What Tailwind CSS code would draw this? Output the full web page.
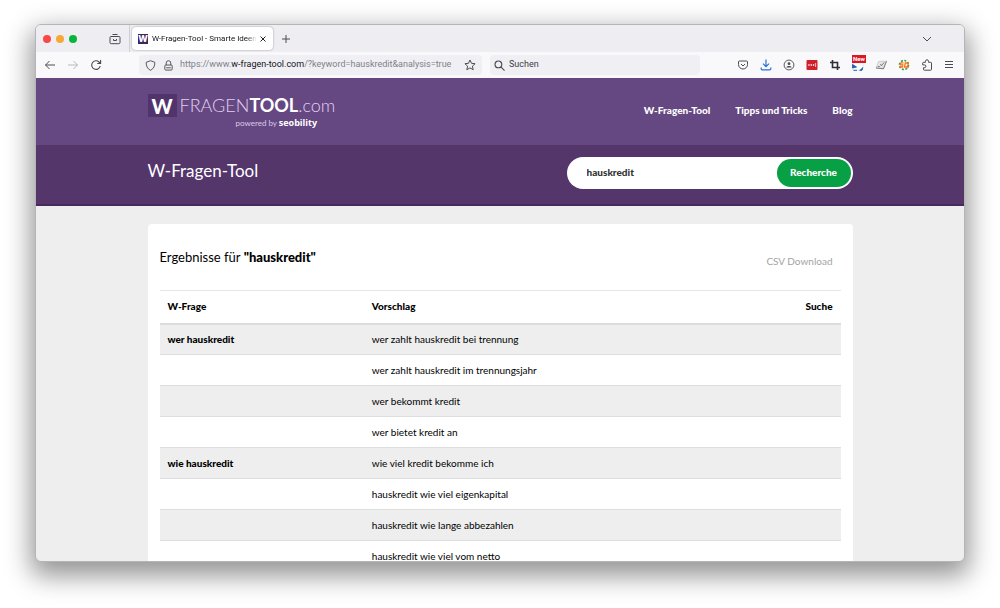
<!DOCTYPE html>
<html lang="de">
<head>
<meta charset="utf-8">
<title>W-Fragen-Tool - Smarte Ideen</title>
<script src="https://cdn.jsdelivr.net/npm/@tailwindcss/browser@4"></script>
</head>
<body class="h-screen bg-white px-[35px] pt-6 pb-[46px] font-['Roboto',sans-serif] text-[#15141a] overflow-hidden">
<div class="flex h-full flex-col overflow-hidden rounded-md border border-[#b5b5b8] bg-[#eeeeee] shadow-[0_10px_26px_4px_rgba(0,0,0,0.42)]">

  <!-- Tab strip -->
  <div class="flex h-[27px] shrink-0 items-center bg-[#eeeef2] text-[#4b4a52]">
    <div class="flex h-full w-[94px] shrink-0 items-center border-r border-[#cfcfd4] pl-[7px]">
      <span class="size-2 rounded-full bg-[#fb4748]"></span>
      <span class="ml-[5px] size-2 rounded-full bg-[#f6a935]"></span>
      <span class="ml-[5px] size-2 rounded-full bg-[#08b53c]"></span>
      <button class="ml-8" aria-label="Ansicht">
        <svg class="size-3" viewBox="0 0 12 12" fill="none" stroke="currentColor"><path d="M3.500 1.500h5M2 3.500h8a1 1 0 0 1 1 1v5a1.200 1.200 0 0 1-1.200 1.200H2.200A1.200 1.200 0 0 1 1 9.500v-5a1 1 0 0 1 1-1zM4.500 6v1.500h3V6" /></svg>
      </button>
    </div>
    <div class="ml-0.5 flex h-[23px] w-[141px] items-center rounded-sm bg-white px-1.5 text-[#15141a] shadow-[0_0_2px_rgba(0,0,0,0.4)]">
      <span class="flex h-[10px] w-[10px] shrink-0 items-center justify-center bg-[#3d2463] font-['Inter',sans-serif] text-[9px] font-extrabold leading-none text-white">W</span>
      <span class="ml-1 w-0 flex-1 overflow-hidden whitespace-nowrap text-[8px] mask-r-from-90%">W-Fragen-Tool - Smarte Ideen f</span>
      <button class="ml-0.5" aria-label="Tab schließen"><svg class="size-2" viewBox="0 0 8 8" stroke="#222" fill="none"><path d="M1.500 1.500l5 5M6.500 1.500l-5 5"/></svg></button>
    </div>
    <button class="ml-2" aria-label="Neuer Tab"><svg class="size-[10px]" viewBox="0 0 10 10" stroke="currentColor" fill="none"><path d="M5 1v8M1 5h8"/></svg></button>
    <button class="mr-8 ml-auto" aria-label="Alle Tabs"><svg class="size-[10px]" viewBox="0 0 10 10" stroke="currentColor" fill="none"><path d="M1 3l4 4 4-4"/></svg></button>
  </div>

  <!-- Toolbar -->
  <div class="flex h-[26px] shrink-0 items-center bg-[#f9f9fb] pr-[10px] pl-2 text-[#4b4a52]">
    <button aria-label="Zurück"><svg class="size-3" viewBox="0 0 12 12" fill="none" stroke="currentColor"><path d="M11 6H1.500M5.500 2l-4 4 4 4"/></svg></button>
    <button class="ml-[11px] text-[#b8b8bd]" aria-label="Vor"><svg class="size-3" viewBox="0 0 12 12" fill="none" stroke="currentColor"><path d="M1 6h9.500M6.500 2l4 4-4 4"/></svg></button>
    <button class="ml-[11px]" aria-label="Neu laden"><svg class="size-3" viewBox="0 0 12 12" fill="none" stroke="currentColor" stroke-width="1.100"><path d="M10.200 7A4.300 4.300 0 1 1 9 3L10.500 4.300M10.600 1v3.500H7.200"/></svg></button>
    <div class="ml-[37px] flex h-5 w-[343px] items-center rounded-sm bg-[#f0f0f4] px-1.5">
      <svg class="size-[11px] shrink-0" viewBox="0 0 12 12" fill="none" stroke="currentColor"><path d="M6 .8L10.700 2.500C10.800 6.500 9.500 9.500 6 11.300 2.500 9.500 1.200 6.500 1.300 2.500z"/></svg>
      <svg class="ml-[7px] size-[11px] shrink-0" viewBox="0 0 12 12" fill="none" stroke="currentColor"><path d="M3.500 5.500V3.300a2.500 2.500 0 0 1 5 0v2.200"/><rect x="2" y="5.500" width="8" height="5.500" rx="1"/><path d="M3.500 8.500h5"/></svg>
      <span class="ml-1.5 flex-1 whitespace-nowrap text-[9px] text-[#808088]">https://www.<span class="text-[#15141a]">w-fragen-tool.com</span>/?keyword=hauskredit&amp;analysis=true</span>
      <button aria-label="Lesezeichen"><svg class="size-3" viewBox="0 0 12 12" fill="none" stroke="currentColor" stroke-linejoin="round"><path d="M6 1l1.500 3.300 3.600.4-2.700 2.400.8 3.600L6 8.900l-3.200 1.800.8-3.600L.9 4.700l3.600-.4z"/></svg></button>
    </div>
    <label class="ml-2 flex h-5 w-[210px] items-center rounded-sm bg-[#f0f0f4] pl-1">
      <svg class="size-[11px] shrink-0" viewBox="0 0 12 12" fill="none" stroke="currentColor" stroke-width="1.200"><circle cx="4.800" cy="4.800" r="3.700"/><path d="M7.500 7.500l4 4"/></svg>
      <input class="ml-1 w-full bg-transparent text-[9px] placeholder:text-[#3b3a42] outline-none" placeholder="Suchen" aria-label="Suchen">
    </label>
    <div class="ml-auto flex items-center gap-[11px]">
      <button aria-label="Pocket"><svg class="size-3" viewBox="0 0 12 12" fill="none" stroke="currentColor"><path d="M2.500 2h7a1 1 0 0 1 1 1v2.500a4.500 4.500 0 0 1-9 0V3a1 1 0 0 1 1-1zM4 5l2 2 2-2"/></svg></button>
      <button class="text-[#2a6fd6]" aria-label="Downloads"><svg class="size-3" viewBox="0 0 12 12" fill="none" stroke="currentColor" stroke-width="1.200"><path d="M6 .5v7M3 4.700l3 3 3-3M1.200 8.500v1.300a1 1 0 0 0 1 1h7.600a1 1 0 0 0 1-1V8.500"/></svg></button>
      <button aria-label="Konto"><svg class="size-3" viewBox="0 0 12 12" fill="none" stroke="currentColor" stroke-width=".9"><circle cx="6" cy="6" r="4.900"/><circle cx="6" cy="4.700" r="1.400" fill="currentColor" stroke="none"/><path d="M3.300 8.600c0-2.300 5.400-2.300 5.400 0z" fill="currentColor" stroke="none"/></svg></button>
      <button aria-label="Passwörter"><svg class="size-3" viewBox="0 0 12 12"><rect x=".5" y="1" width="11" height="10" rx="1" fill="#d0202a"/><path d="M2.300 6h1.300M4.600 6h1.300M6.900 6h1.300" stroke="#fff" stroke-width="1.400"/><path d="M9.600 4v4" stroke="#fff" stroke-width=".7"/></svg></button>
      <button class="text-[#2f2e38]" aria-label="Zuschneiden"><svg class="size-3" viewBox="0 0 12 12" fill="none" stroke="currentColor" stroke-width="1.600"><path d="M3.500 1v7.500H11M1 3.500h7.500V11"/></svg></button>
      <button class="relative" aria-label="Neuigkeiten"><svg class="size-3" viewBox="0 0 12 12"><path d="M1 4h10v4a3 3 0 0 1-3 3H1z" fill="#fff" stroke="#c8d4e4" stroke-width=".5"/><path d="M.5 5.500v3.500l4-1zM1.500 11.300h3.500M7.500 11.300h2.500l.8-3" fill="#2367ad" stroke="#2367ad"/></svg><span class="absolute -top-1 left-0 bg-[#dc1622] px-px text-[6px] font-bold leading-[8px] text-white">New</span></button>
      <button aria-label="Prüfen"><svg class="size-3" viewBox="0 0 12 12" fill="none"><path d="M3.500 2.500l8-.5-3 7.500L1 9z" fill="#e6e6e6" stroke="#aaa" stroke-width=".5"/><path d="M1 9l7.500.8 3-7.500M5.500 5l.8 1.800 3-3.500M2.800 7.500h2" stroke="#555" stroke-width=".7"/></svg></button>
      <button aria-label="SEOquake"><svg class="size-3" viewBox="0 0 12 12" fill="none"><circle cx="6" cy="6" r="4.500" stroke="#3a9d3e" stroke-width="1.600" stroke-dasharray="2 1.500"/><path d="M5.500 3.900H3L2.500 5.800h2.300L4.300 8H1.300M7.300 4h3L9.600 8H6.500zM8.800 7l1.500 1.800" stroke="#f5761a" stroke-width="1.300"/></svg></button>
      <button aria-label="Erweiterungen"><svg class="size-3" viewBox="0 0 12 12" fill="none" stroke="currentColor" stroke-linejoin="round"><path d="M4.500 3.300V2.300a1.500 1.500 0 0 1 3 0v1h2.200a.8.8 0 0 1 .8.800v6.300a.8.8 0 0 1-.8.800H3.300a.8.8 0 0 1-.8-.8V8.700h1a1.400 1.400 0 0 0 0-2.800H1.700V4.100a.8.8 0 0 1 .8-.8z"/></svg></button>
      <button aria-label="Menü"><svg class="size-[10px]" viewBox="0 0 10 10" fill="none" stroke="currentColor"><path d="M1 1.500h8M1 4.500h8M1 7.500h8"/></svg></button>
    </div>
  </div>

  <!-- Page -->
  <div class="flex-1 overflow-hidden font-['Lato',sans-serif] text-[10px] text-black">
    <header class="h-[67px] bg-[#654882] px-9 text-white">
      <div class="mx-auto flex h-full max-w-[705px] items-center">
        <a href="#" class="flex flex-col">
          <span class="flex items-center">
            <span class="flex h-[23px] w-[29px] items-center justify-center bg-[#51346b] text-xl leading-none font-black">W</span>
            <span class="ml-[3px] text-lg leading-[23px] font-light text-[#e0d0f0]">FRAGEN<span class="font-bold text-white">TOOL</span>.com</span>
          </span>
          <span class="ml-[88px] text-[8px] leading-3 text-[#d9cbe8]">powered by <b class="font-['Open_Sans',sans-serif] text-[9px] text-white">seobility</b></span>
        </a>
        <nav class="ml-auto flex gap-[25px] pb-0.5 font-black">
          <a href="#">W-Fragen-Tool</a><a href="#">Tipps und Tricks</a><a href="#">Blog</a>
        </nav>
      </div>
    </header>
    <section class="h-[61px] border-b-2 border-[#47285f] bg-[#54366b] px-9 pb-1 text-white">
      <div class="mx-auto flex h-full max-w-[705px] items-center justify-between">
        <h1 class="pb-1 text-[17px]">W-Fragen-Tool</h1>
        <form class="flex h-8 w-[286px] items-center rounded-full bg-white p-0.5 pl-5">
          <input class="w-0 flex-1 font-black text-[#333] outline-none" value="hauskredit" aria-label="Suchbegriff">
          <button type="button" class="h-7 w-[74px] rounded-full bg-[#08a045] font-black">Recherche</button>
        </form>
      </div>
    </section>
    <main class="px-9 pt-[18px]">
      <div class="mx-auto max-w-[705px] rounded-t-sm bg-white px-3 pt-6">
        <div class="flex h-[42px] items-start justify-between pr-2">
          <h2 class="text-[13px] leading-[18px]">Ergebnisse für <b class="font-black">"hauskredit"</b></h2>
          <a href="#" class="pt-1.5 text-[#a3a3a3]">CSV Download</a>
        </div>
        <table class="w-full table-fixed text-left">
          <thead><tr class="h-[33px] border-t border-b-2 border-t-[#e6e6e6] border-b-[#dcdcdc]"><th class="w-[30%] px-2 font-black">W-Frage</th><th class="px-2 font-black">Vorschlag</th><th class="w-[12%] px-2 text-right font-black">Suche</th></tr></thead>
          <tbody>
            <tr class="h-[31px] border-b border-[#dedede] odd:bg-[#eeeeee]"><th class="px-2 font-black">wer hauskredit</th><td class="px-2">wer zahlt hauskredit bei trennung</td><td></td></tr>
            <tr class="h-[31px] border-b border-[#dedede] odd:bg-[#eeeeee]"><td></td><td class="px-2">wer zahlt hauskredit im trennungsjahr</td><td></td></tr>
            <tr class="h-[31px] border-b border-[#dedede] odd:bg-[#eeeeee]"><td></td><td class="px-2">wer bekommt kredit</td><td></td></tr>
            <tr class="h-[31px] border-b border-[#dedede] odd:bg-[#eeeeee]"><td></td><td class="px-2">wer bietet kredit an</td><td></td></tr>
            <tr class="h-[31px] border-b border-[#dedede] odd:bg-[#eeeeee]"><th class="px-2 font-black">wie hauskredit</th><td class="px-2">wie viel kredit bekomme ich</td><td></td></tr>
            <tr class="h-[31px] border-b border-[#dedede] odd:bg-[#eeeeee]"><td></td><td class="px-2">hauskredit wie viel eigenkapital</td><td></td></tr>
            <tr class="h-[31px] border-b border-[#dedede] odd:bg-[#eeeeee]"><td></td><td class="px-2">hauskredit wie lange abbezahlen</td><td></td></tr>
            <tr class="h-[31px] border-b border-[#dedede] odd:bg-[#eeeeee]"><td></td><td class="px-2">hauskredit wie viel vom netto</td><td></td></tr>
          </tbody>
        </table>
      </div>
    </main>
  </div>
</div>
</body>
</html>
